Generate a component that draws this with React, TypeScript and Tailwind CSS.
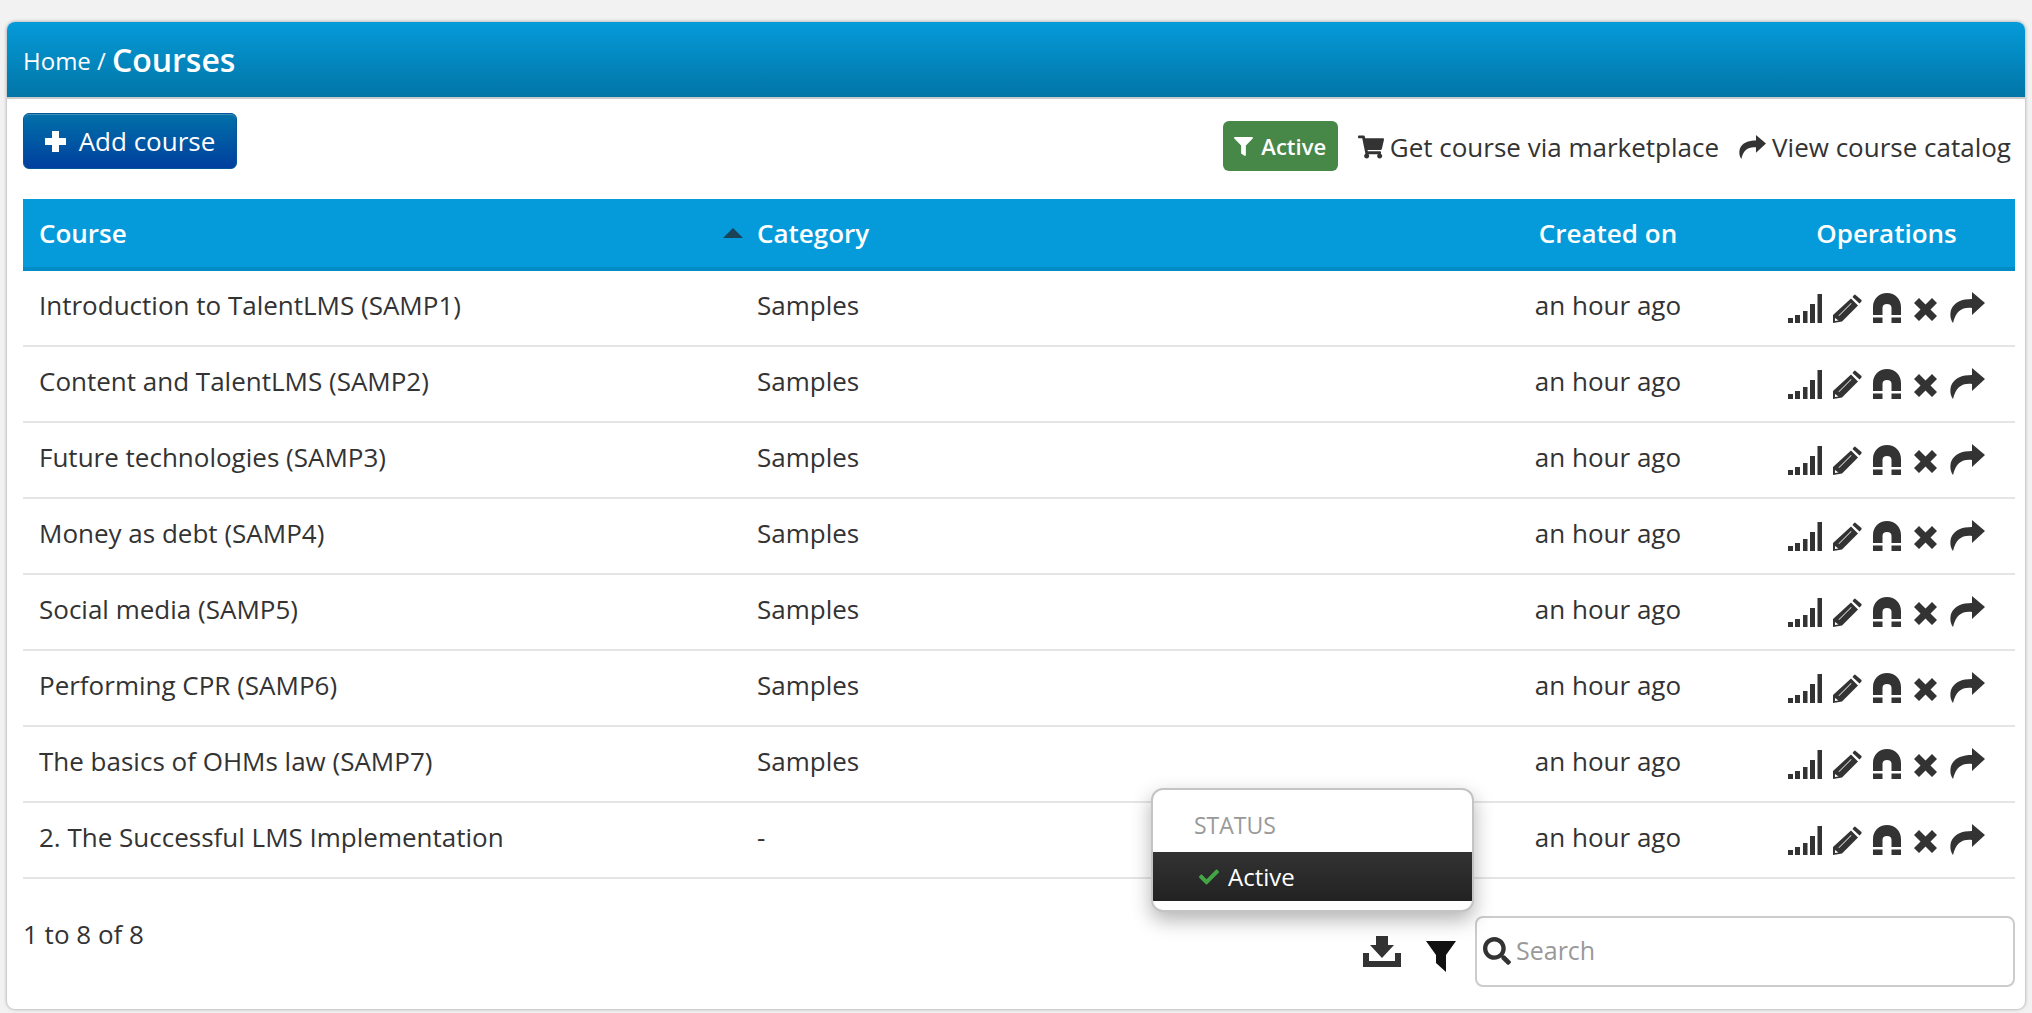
import { FaCheck, FaFilter, FaSearch, FaShoppingCart } from "react-icons/fa";

const courses = [
    { name: "Introduction to TalentLMS (SAMP1)", category: "Samples" },
    { name: "Content and TalentLMS (SAMP2)", category: "Samples" },
    { name: "Future technologies (SAMP3)", category: "Samples" },
    { name: "Money as debt (SAMP4)", category: "Samples" },
    { name: "Social media (SAMP5)", category: "Samples" },
    { name: "Performing CPR (SAMP6)", category: "Samples" },
    { name: "The basics of OHMs law (SAMP7)", category: "Samples" },
    { name: "2. The Successful LMS Implementation", category: "-" },
];

function SignalIcon() {
    return (
        <svg width="34" height="29" viewBox="0 0 34 29" fill="#333">
            <rect x="0" y="24" width="5" height="5" />
            <rect x="7" y="21" width="5" height="8" />
            <rect x="15" y="17" width="4.5" height="12" />
            <rect x="22" y="10" width="5" height="19" />
            <rect x="29.5" y="0" width="4.5" height="29" />
        </svg>
    );
}

function PencilIcon() {
    return (
        <svg width="29" height="29" viewBox="0 0 29 29" fill="#333">
            <path d="M22 0.5 L28.5 6 Q29 7 28 8 L26.5 9.5 L19.5 3 L21 1 Q21.5 0.5 22 0.5 Z" />
            <path d="M18 4.5 L25 11.5 L9 27.5 L0 29 L0 21 Z M18 9 L5.5 21.5 L6 22 L18.5 9.5 Z M2 24 L2 27 L5.5 26.5 Z" fillRule="evenodd" />
        </svg>
    );
}

function MagnetIcon() {
    return (
        <svg width="28" height="30" viewBox="0 0 28 30" fill="#333">
            <path d="M14 0 C22 0 28 6 28 14 L28 22 L18.5 22 L18.5 15 C18.5 12.5 17 11 14 11 C11 11 9.5 12.5 9.5 15 L9.5 22 L0 22 L0 14 C0 6 6 0 14 0 Z" />
            <rect x="0" y="24.5" width="9.5" height="5.5" />
            <rect x="18.5" y="24.5" width="9.5" height="5.5" />
        </svg>
    );
}

function CrossIcon() {
    return (
        <svg width="23" height="23" viewBox="0 0 23 23" fill="#333">
            <path d="M5 0 L11.5 6.5 L18 0 L23 5 L16.5 11.5 L23 18 L18 23 L11.5 16.5 L5 23 L0 18 L6.5 11.5 L0 5 Z" />
        </svg>
    );
}

function ShareIcon({ size = 35 }: { size?: number }) {
    return (
        <svg width={size} height={(size * 31) / 35} viewBox="0 0 35 31" fill="#333">
            <path d="M22 0 L35 11 L22 23 L22 16 C12 15 6 19 3 31 C0 27 0 22 1 18 C4 10 12 7 22 7 Z" />
        </svg>
    );
}

function DownloadIcon() {
    return (
        <svg width="38" height="31" viewBox="0 0 38 31" fill="#333">
            <path d="M13 0 L25 0 L25 9 L31 9 L19 22 L7 9 L13 9 Z" />
            <path d="M0 17 L6 17 L6 25 L32 25 L32 17 L38 17 L38 31 L0 31 Z" />
        </svg>
    );
}

function FunnelIcon() {
    return (
        <svg width="30" height="31" viewBox="0 0 30 31" fill="#111">
            <path d="M0 0 L30 0 L20 14 L20 31 L10 22 L10 14 Z" />
        </svg>
    );
}

function PlusIcon() {
    return (
        <svg width="21" height="21" viewBox="0 0 21 21" fill="#fff">
            <path d="M7 0 L14 0 L14 7 L21 7 L21 14 L14 14 L14 21 L7 21 L7 14 L0 14 L0 7 L7 7 Z" />
        </svg>
    );
}

function CourseRow({ name, category }: { name: string; category: string }) {
    return (
        <div className="grid h-[76px] grid-cols-[734px_701px_300px_1fr] items-center border-b-2 border-[#e5e5e5] pb-[6px] text-[26px] text-[#333]">
            <div className="pl-4">{name}</div>
            <div>{category}</div>
            <div className="text-center">an hour ago</div>
            <div className="mt-[5px] flex items-end justify-center gap-[11px]">
                <SignalIcon />
                <PencilIcon />
                <MagnetIcon />
                <div className="mb-[2px] ml-[2px]">
                    <CrossIcon />
                </div>
                <div className="ml-[2px]">
                    <ShareIcon />
                </div>
            </div>
        </div>
    );
}

export default function App() {
    return (
        <div
            className="h-[1013px] overflow-hidden bg-[#f2f2f2] pl-[7px] pr-[7px] pt-[22px]"
            style={{ fontFamily: '"Open Sans", sans-serif' }}
        >
            <div className="relative h-[987px] rounded-lg bg-white shadow-[0_0_3px_1px_#bdbdbd]">
                <div className="flex h-[77px] items-center rounded-t-lg border-b-2 border-[#ccc] bg-gradient-to-b from-[#059bda] to-[#0275a6] pl-4 text-white">
                    <span className="mt-[3px] text-[24px]">Home /</span>
                    <span className="ml-[6px] text-[32px] font-semibold leading-none">Courses</span>
                </div>

                <div className="pl-4 pr-[10px]">
                    <div className="flex h-[100px] items-start justify-between pt-[14px]">
                        <button className="flex h-[56px] w-[214px] items-center justify-center gap-[13px] rounded-md border border-[#03569a] bg-gradient-to-b from-[#0570a8] to-[#023e9e] text-[26px] text-white shadow-[inset_0_1px_0_#3d8fb8]">
                            <PlusIcon />
                            Add course
                        </button>
                        <div className="mr-[4px] flex items-center gap-[20px] pt-[8px] text-[26px] text-[#333]">
                            <span className="flex h-[50px] w-[115px] items-center justify-center gap-[8px] rounded-md bg-[#478747] text-[22px] font-semibold text-white">
                                <FaFilter className="text-[19px]" />
                                Active
                            </span>
                            <span className="flex items-center gap-[6px] pt-[2px]">
                                <FaShoppingCart className="text-[26px]" />
                                Get course via marketplace
                            </span>
                            <span className="flex items-center gap-[6px] pt-[2px]">
                                <ShareIcon size={27} />
                                View course catalog
                            </span>
                        </div>
                    </div>

                    <div className="grid h-[72px] grid-cols-[734px_701px_300px_1fr] items-center border-b-4 border-[#038cc6] bg-[#059bda] text-[26px] font-semibold text-white">
                        <div className="flex items-center justify-between pl-4 pr-[14px]">
                            Course
                            <span className="h-0 w-0 border-x-[10px] border-b-[10px] border-x-transparent border-b-[#1b4358]" />
                        </div>
                        <div>Category</div>
                        <div className="text-center">Created on</div>
                        <div className="text-center">Operations</div>
                    </div>

                    {courses.map((course) => (
                        <CourseRow key={course.name} name={course.name} category={course.category} />
                    ))}

                    <div className="flex items-start justify-between">
                        <div className="pt-[36px] text-[26px] text-[#333]">1 to 8 of 8</div>
                        <div className="flex items-start pt-[37px]">
                            <div className="mr-[25px] mt-[20px]">
                                <DownloadIcon />
                            </div>
                            <div className="mr-[19px] mt-[25px]">
                                <FunnelIcon />
                            </div>
                            <div className="flex h-[71px] w-[540px] items-center gap-[5px] rounded-lg border-2 border-[#ccc] pb-[2px] pl-[6px] text-[25px] text-[#999]">
                                <FaSearch className="text-[28px] text-[#333]" />
                                Search
                            </div>
                        </div>
                    </div>
                </div>

                <div className="absolute left-[1144px] top-[766px] h-[124px] w-[323px] overflow-hidden rounded-xl border-2 border-[#c4c4c4] bg-white shadow-[0_8px_20px_rgba(0,0,0,0.3)]">
                    <div className="flex h-[62px] items-center pl-[41px] pt-[9px] text-[23px] text-[#999]">STATUS</div>
                    <div className="flex h-[49px] items-center gap-[9px] bg-gradient-to-b from-[#333] to-[#222] pl-[46px] text-[24px] text-white">
                        <FaCheck className="text-[20px] text-[#44a547]" />
                        Active
                    </div>
                </div>
            </div>
        </div>
    );
}
